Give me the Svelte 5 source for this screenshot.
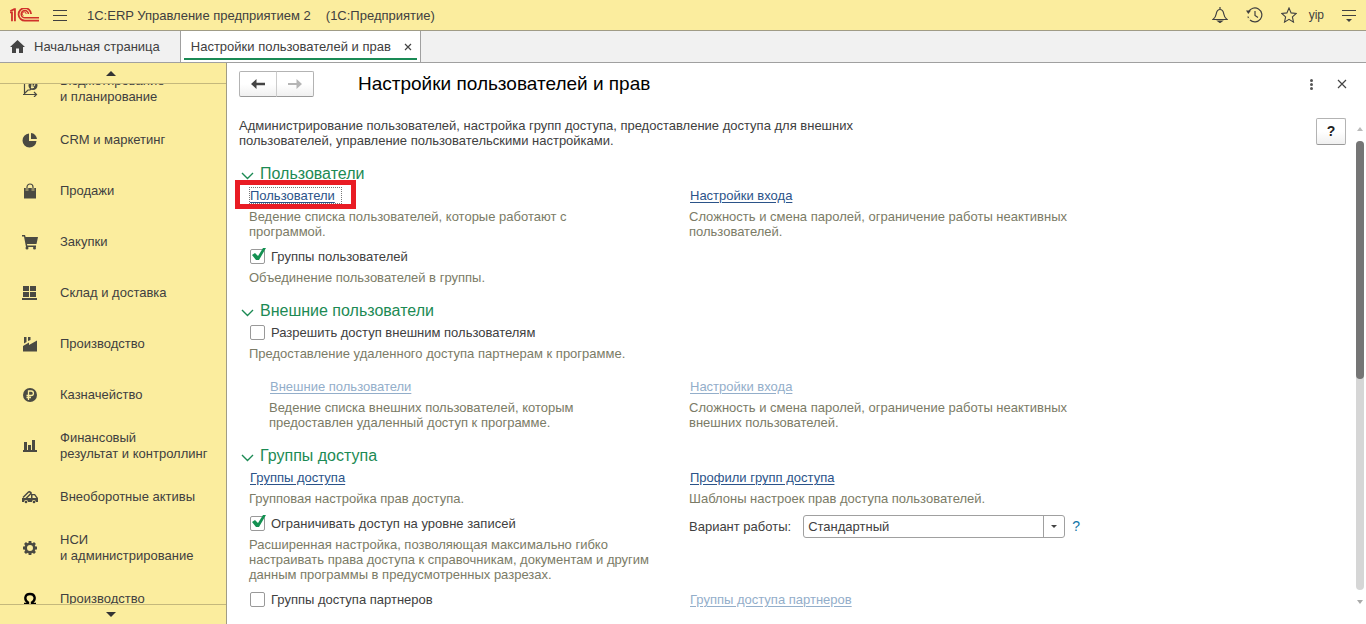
<script>
	const menu = [
		{ icon: "plan", text: "Бюджетирование\nи планирование" },
		{ icon: "pie", text: "CRM и маркетинг" },
		{ icon: "bag", text: "Продажи" },
		{ icon: "cart", text: "Закупки" },
		{ icon: "boxes", text: "Склад и доставка" },
		{ icon: "factory", text: "Производство" },
		{ icon: "ruble", text: "Казначейство" },
		{ icon: "bars", text: "Финансовый\nрезультат и контроллинг" },
		{ icon: "truck", text: "Внеоборотные активы" },
		{ icon: "gear", text: "НСИ\nи администрирование" },
		{ icon: "omega", text: "Производство" },
	];

	let open = $state({ users: true, external: true, access: true });
	let userGroups = $state(true);
	let externalAccess = $state(false);
	let recordLevel = $state(true);
	let partnerGroups = $state(false);
	let mode = $state("Стандартный");
</script>

{#snippet icon(name)}
	<svg class="icon" viewBox="0 0 16 16" aria-hidden="true">
		{#if name === "plan"}
			<path d="M2.500 0v14M1 13.500h13M12 11l2.500 2.500L12 16M3 12l3-3h2l3-3" fill="none" stroke="currentColor" stroke-width="1.200" />
			<circle cx="11" cy="4.500" r="4.500" />
			<path d="M10 7.500V2.500h1.500a1.300 1.300 0 0 1 0 2.600H9M9 6.500h3" fill="none" stroke="#fbed9e" />
		{:else if name === "pie"}
			<path d="M7 1.500V9h7.500A7 7 0 1 1 7 1.500z" />
			<path d="M9 1a6.500 6.500 0 0 1 6 6H9z" />
		{:else if name === "bag"}
			<path d="M2 5h12v10.500H2z" />
			<path d="M5 8V4a3 3 0 0 1 6 0v4" fill="none" stroke="#fbed9e" stroke-width="2.400" />
			<path d="M5 8V4a3 3 0 0 1 6 0v4" fill="none" stroke="currentColor" stroke-width="1.200" />
		{:else if name === "cart"}
			<path d="M0 1h3l.6 2H16l-1.500 7H5l.3 1.500H14V13H4L2 2.500H0z" />
			<circle cx="5" cy="14" r="1.500" />
			<circle cx="12.500" cy="14" r="1.500" />
		{:else if name === "boxes"}
			<path d="M1 1h6v5H1zM8 1h6v5H8zM1 7h6v5H1zM8 7h6v5H8zM0 13h15v2H0z" />
		{:else if name === "factory"}
			<path d="M1 15.500V10l6-3.500V9l8-4.500v11z" />
			<path d="M2 1h2.500v5L2 7.500zM6 1h2.500v3L6 5z" />
		{:else if name === "ruble"}
			<circle cx="8" cy="8" r="7" />
			<path d="M6.500 13V4h2.700a2.200 2.200 0 0 1 0 4.500H4.500M4.500 10.500H9" fill="none" stroke="#fbed9e" stroke-width="1.300" />
		{:else if name === "bars"}
			<path d="M2 4h3v8H2zM6 7h3v5H6zM10 2h3v10h-3zM1 12h14v2H1z" />
		{:else if name === "truck"}
			<path d="M1 8.500l6-6M3.500 10l6-6M7 2.500l2.500 1.500" fill="none" stroke="currentColor" stroke-width="1.500" />
			<path d="M0 9h9V5h4l3 4v4h-2.200a2 2 0 0 0-4 0H6a2 2 0 0 0-4 0H0zM10.500 6.300V9h3.800l-2-2.700z" fill-rule="evenodd" />
			<circle cx="4" cy="13" r="1.300" />
			<circle cx="12" cy="13" r="1.300" />
		{:else if name === "gear"}
			<circle cx="8" cy="8" r="4.300" fill="none" stroke="currentColor" stroke-width="2.600" />
			<path d="M8 1v2.500M8 12.500V15M1 8h2.500M12.500 8H15M3 3l1.800 1.800M11.200 11.200L13 13M3 13l1.800-1.800M11.200 4.800L13 3" stroke="currentColor" stroke-width="2.800" />
		{:else if name === "omega"}
			<path d="M2 13h4v-1.500C2 9 2.500 3 8 3s6 6 2 8.500V13h4" fill="none" stroke="#000" stroke-width="2.400" />
		{/if}
	</svg>
{/snippet}

{#snippet title(key, text)}
	<h2>
		<button class="fold" aria-expanded={open[key]} onclick={() => (open[key] = !open[key])}>
			<svg class:closed={!open[key]} width="13" height="11" viewBox="0 0 13 11" aria-hidden="true">
				<path d="M1 4l5.500 5.500L12 4" fill="none" stroke="currentColor" stroke-width="1.400" />
			</svg>
			{text}
		</button>
	</h2>
{/snippet}

<div class="app">
	<header class="topbar">
		<svg class="logo" viewBox="0 0 88 42" aria-label="1С">
			<g fill="none" stroke="#d0312a" stroke-width="5.500">
				<path d="M0 13h6v27" />
				<path d="M1 9L13 3h2v37" />
				<path d="M64 18A19 19 0 1 0 46 38H88" />
				<path d="M56 18A11 11 0 1 0 46 29.500H88" stroke-width="4.500" />
				<path d="M41 23a6 6 0 1 1 8-5" stroke-width="3" />
			</g>
		</svg>
		<button class="bare" aria-label="Меню">
			<svg width="14" height="11" viewBox="0 0 14 11"><path d="M0 .5h14M0 5.500h14M0 10.500h14" stroke="currentColor" /></svg>
		</button>
		<span class="product">1С:ERP Управление предприятием 2</span>
		<span class="platform">(1С:Предприятие)</span>
		<div class="tools">
			<button class="bare" aria-label="Уведомления">
				<svg width="16" height="16" viewBox="0 0 16 16" fill="none" stroke="currentColor" stroke-width="1.200">
					<path d="M1 12.500c2-1.500 2.800-3 3.200-5.500C4.700 4 5.500 2.500 8 2.500S11.300 4 11.800 7c.4 2.500 1.200 4 3.200 5.500zM8 0v2.500" />
					<path d="M6 14h4l-2 1.500z" fill="currentColor" />
				</svg>
			</button>
			<button class="bare" aria-label="История">
				<svg width="17" height="16" viewBox="0 0 17 16" fill="none" stroke="currentColor" stroke-width="1.200">
					<path d="M2.500 5A7 7 0 1 1 4 13" />
					<path d="M2 9.500A7 7 0 0 0 3 12" stroke-dasharray="1.500 1" />
					<path d="M9 4v4.500l3 2" />
					<path d="M0 3.500h5L2.300 7z" fill="currentColor" stroke="none" />
				</svg>
			</button>
			<button class="bare" aria-label="Избранное">
				<svg width="16" height="16" viewBox="0 0 16 16" fill="none" stroke="currentColor" stroke-width="1.100">
					<path d="M8 1l2.100 4.900 5.200.5-3.900 3.500 1.100 5.200L8 12.400l-4.500 2.700 1.100-5.200L.7 6.400l5.200-.5z" />
				</svg>
			</button>
			<button class="bare user">yip</button>
			<button class="bare" aria-label="Настройки">
				<svg width="14" height="14" viewBox="0 0 14 14">
					<path d="M0 2.500h14M0 7.500h14" stroke="currentColor" />
					<path d="M4 11h6l-3 3z" fill="currentColor" />
				</svg>
			</button>
		</div>
	</header>

	<nav class="tabs">
		<a class="tab home" href="#home">
			<svg width="15" height="13" viewBox="0 0 15 13" aria-hidden="true">
				<path d="M7.500 0L15 7h-2v6H9V8.500H6V13H2V7H0z" fill="#444" />
			</svg>
			Начальная страница
		</a>
		<div class="tab active">
			<a href="#settings">Настройки пользователей и прав</a>
			<button class="bare" aria-label="Закрыть вкладку">
				<svg width="8" height="8" viewBox="0 0 8 8"><path d="M1 1l6 6M7 1L1 7" stroke="#444" stroke-width="1.200" /></svg>
			</button>
		</div>
	</nav>

	<div class="body">
		<aside>
			<button class="scroll up" aria-label="Вверх">
				<svg width="10" height="5" viewBox="0 0 10 5"><path d="M0 5l5-5 5 5z" fill="currentColor" /></svg>
			</button>
			<ul>
				{#each menu as item}
					<li><a href="#section">{@render icon(item.icon)}<span>{item.text}</span></a></li>
				{/each}
			</ul>
			<button class="scroll down" aria-label="Вниз">
				<svg width="10" height="5" viewBox="0 0 10 5"><path d="M0 0l5 5 5-5z" fill="currentColor" /></svg>
			</button>
		</aside>

		<main>
			<div class="head">
				<div class="history">
					<button aria-label="Назад">
						<svg width="14" height="10" viewBox="0 0 14 10"><path d="M0 5l5.500-5v3.800H14v2.400H5.500V10z" fill="#444" /></svg>
					</button>
					<button aria-label="Вперед" disabled>
						<svg width="14" height="10" viewBox="0 0 14 10"><path d="M14 5L8.500 0v4H0v2h8.500v4z" fill="#b5b5b5" /></svg>
					</button>
				</div>
				<h1>Настройки пользователей и прав</h1>
				<button class="bare more" aria-label="Еще">
					<svg width="3" height="11" viewBox="0 0 3 11" fill="#555"><circle cx="1.500" cy="1.500" r="1.500" /><circle cx="1.500" cy="5.500" r="1.500" /><circle cx="1.500" cy="9.500" r="1.500" /></svg>
				</button>
				<button class="bare" aria-label="Закрыть">
					<svg width="10" height="10" viewBox="0 0 10 10"><path d="M1 1l8 8M9 1L1 9" stroke="#444" stroke-width="1.200" /></svg>
				</button>
			</div>

			<div class="content">
				<div class="form">
					<p class="intro">{"Администрирование пользователей, настройка групп доступа, предоставление доступа для внешних\nпользователей, управление пользовательскими настройками."}</p>

					<section>
						{@render title("users", "Пользователи")}
						{#if open.users}
							<div class="grid">
								<div>
									<div class="row"><a class="link current" href="#users">Пользователи</a></div>
									<p>{"Ведение списка пользователей, которые работают с\nпрограммой."}</p>
								</div>
								<div>
									<div class="row"><a class="link" href="#login">Настройки входа</a></div>
									<p>{"Сложность и смена паролей, ограничение работы неактивных\nпользователей."}</p>
								</div>
								<div>
									<label class="row"><input type="checkbox" bind:checked={userGroups} />Группы пользователей</label>
									<p>Объединение пользователей в группы.</p>
								</div>
							</div>
						{/if}
					</section>

					<section>
						{@render title("external", "Внешние пользователи")}
						{#if open.external}
							<div class="grid">
								<div class="wide">
									<label class="row"><input type="checkbox" bind:checked={externalAccess} />Разрешить доступ внешним пользователям</label>
									<p>Предоставление удаленного доступа партнерам к программе.</p>
								</div>
								<div class="sub indent">
									<div class="row"><a class="link" class:off={!externalAccess} href="#external">Внешние пользователи</a></div>
									<p>{"Ведение списка внешних пользователей, которым\nпредоставлен удаленный доступ к программе."}</p>
								</div>
								<div class="sub">
									<div class="row"><a class="link" class:off={!externalAccess} href="#external-login">Настройки входа</a></div>
									<p>{"Сложность и смена паролей, ограничение работы неактивных\nвнешних пользователей."}</p>
								</div>
							</div>
						{/if}
					</section>

					<section>
						{@render title("access", "Группы доступа")}
						{#if open.access}
							<div class="grid">
								<div>
									<div class="row"><a class="link" href="#groups">Группы доступа</a></div>
									<p>Групповая настройка прав доступа.</p>
								</div>
								<div>
									<div class="row"><a class="link" href="#profiles">Профили групп доступа</a></div>
									<p>Шаблоны настроек прав доступа пользователей.</p>
								</div>
								<div>
									<label class="row"><input type="checkbox" bind:checked={recordLevel} />Ограничивать доступ на уровне записей</label>
									<p>{"Расширенная настройка, позволяющая максимально гибко\nнастраивать права доступа к справочникам, документам и другим\nданным программы в предусмотренных разрезах."}</p>
								</div>
								<div class="variant">
									<label for="mode">Вариант работы:</label>
									<div class="select">
										<select id="mode" bind:value={mode}>
											<option>Стандартный</option>
											<option>Производительный</option>
										</select>
										<svg width="6" height="3" viewBox="0 0 6 3" aria-hidden="true"><path d="M0 0h6L3 3z" fill="#444" /></svg>
									</div>
									<button class="bare hint">?</button>
								</div>
								<label class="row"><input type="checkbox" bind:checked={partnerGroups} />Группы доступа партнеров</label>
								<div class="row"><a class="link" class:off={!partnerGroups} href="#partners">Группы доступа партнеров</a></div>
							</div>
						{/if}
					</section>
				</div>

				<button class="help">?</button>
				<div class="bar">
					<svg width="6" height="4" viewBox="0 0 6 4"><path d="M0 4l3-4 3 4z" fill="#bbb" /></svg>
					<div class="track"><div class="thumb"></div></div>
					<svg width="6" height="4" viewBox="0 0 6 4"><path d="M0 0l3 4 3-4z" fill="#aaa" /></svg>
				</div>
			</div>
		</main>
	</div>
</div>

<style>
	:global(body) {
		margin: 0;
		font-family: "Liberation Sans", Arial, sans-serif;
		font-size: 13px;
		line-height: 15px;
		color: #404040;
	}

	h1, h2, p, ul {
		margin: 0;
		padding: 0;
		font-weight: normal;
	}

	button {
		font: inherit;
		color: inherit;
		padding: 0;
		cursor: pointer;
	}

	a {
		color: inherit;
		text-decoration: none;
	}

	svg {
		display: block;
		flex: none;
	}

	.bare {
		border: 0;
		background: none;
	}

	.app {
		display: flex;
		flex-direction: column;
		height: 100vh;
		overflow: hidden;
		background: #fff;
	}

	.topbar {
		display: flex;
		align-items: center;
		height: 30px;
		padding: 0 10px;
		background: #fbed9e;
		border-bottom: 1px solid #a09c86;
	}

	.logo {
		width: 29px;
		height: 14px;
		margin-right: 14px;
	}

	.product {
		margin: 0 15px 0 20px;
	}

	.tools {
		display: flex;
		align-items: center;
		gap: 18px;
		margin-left: auto;
	}

	.user {
		font-size: 12px;
		margin-left: -6px;
	}

	.tabs {
		display: flex;
		height: 31px;
		background: #f1f1f1;
		border-bottom: 1px solid #a0a0a0;
	}

	.tab {
		display: flex;
		align-items: center;
		border-right: 1px solid #a0a0a0;
	}

	.home {
		gap: 9px;
		padding: 0 20px 0 10px;
	}

	.active {
		gap: 10px;
		padding: 0 5px 0 7px;
		border-left: 3px solid #fff;
		background: #fff linear-gradient(#1a8a55, #1a8a55) 0 27px / calc(100% - 3px) 2px no-repeat;
	}

	.active .bare {
		padding: 3px;
	}

	.body {
		display: flex;
		flex: 1;
		min-height: 0;
	}

	aside {
		display: flex;
		flex-direction: column;
		flex: none;
		width: 226px;
		background: #fbed9e;
		border-right: 1px solid #a09c86;
	}

	.scroll {
		display: flex;
		align-items: center;
		justify-content: center;
		height: 21px;
		padding-right: 4px;
		border: 0;
		background: none;
		color: #333;
	}

	.up {
		border-bottom: 1px solid #c4b87c;
	}

	.down {
		height: 20px;
		border-top: 1px solid #c4b87c;
	}

	aside ul {
		flex: 1;
		min-height: 0;
		overflow: hidden;
		list-style: none;
	}

	/* the list is scrolled a little way down */
	aside li:first-child {
		margin-top: -21px;
	}

	aside a {
		display: flex;
		align-items: center;
		gap: 22px;
		height: 51px;
		padding-left: 22px;
		line-height: 16px;
		white-space: pre-line;
	}

	.icon {
		width: 16px;
		height: 16px;
		fill: currentColor;
		color: #4a4a42;
	}

	main {
		display: flex;
		flex-direction: column;
		flex: 1;
		min-width: 0;
		padding: 8px 2px 0 12px;
	}

	.head {
		display: flex;
		align-items: center;
		height: 26px;
		padding-right: 17px;
	}

	.history {
		display: flex;
		margin-right: 44px;
	}

	.history button {
		display: flex;
		align-items: center;
		justify-content: center;
		width: 38px;
		height: 26px;
		border: 1px solid #b3b3b3;
		border-bottom-color: #999;
		border-radius: 2px 0 0 2px;
		background: linear-gradient(#fff 50%, #f0f0f0);
	}

	.history button + button {
		margin-left: -1px;
		border-left-color: #ccc;
		border-radius: 0 2px 2px 0;
	}

	h1 {
		font-size: 19px;
		line-height: 24px;
		color: #000;
	}

	.more {
		margin: 0 24px 0 auto;
	}

	.content {
		display: flex;
		flex: 1;
		min-height: 0;
		padding-top: 21px;
	}

	.form {
		flex: 1;
		min-width: 0;
	}

	.form p {
		white-space: pre-line;
	}

	.intro {
		padding-bottom: 15px;
	}

	section {
		margin-bottom: 8px;
	}

	.fold {
		display: flex;
		align-items: center;
		gap: 6px;
		height: 22px;
		padding-left: 2px;
		border: 0;
		background: none;
		font-size: 16px;
		line-height: 22px;
		color: #1c8a54;
	}

	.closed {
		transform: rotate(-90deg);
	}

	.grid {
		display: grid;
		grid-template-columns: minmax(0, 440px) 1fr;
		padding-left: 10px;
	}

	.wide {
		grid-column: 1 / -1;
	}

	.sub {
		margin-top: 8px;
	}

	.indent {
		padding-left: 20px;
	}

	.grid p {
		padding: 3px 0 7px;
		color: #7b7b66;
	}

	.row {
		display: flex;
		align-items: center;
		height: 21px;
		padding-left: 1px;
	}

	.link {
		color: #2b5389;
		text-decoration: underline;
		text-underline-offset: 2px;
	}

	.off {
		color: #93aeca;
	}

	.current {
		position: relative;
		padding-right: 6px;
		outline: 1px dotted #777;
	}

	/* red frame round the selected command */
	.current::after {
		content: "";
		position: absolute;
		inset: -8px -15px -6px -15px;
		border: 5px solid #e91c24;
		pointer-events: none;
	}

	input {
		appearance: none;
		box-sizing: border-box;
		width: 15px;
		height: 15px;
		margin: 0 6px 0 0;
		border: 1px solid #999;
		border-radius: 2px;
		background: #fff;
	}

	input:checked::before {
		content: "";
		display: block;
		width: 16px;
		height: 13px;
		margin-top: -2px;
		background: #149152;
		clip-path: polygon(1px 7px, 4px 5px, 7px 8px, 12px 0, 15px 0, 8px 12px, 5px 12px);
	}

	.variant {
		display: flex;
		align-items: center;
		height: 27px;
	}

	.select {
		position: relative;
		width: 262px;
		margin: 0 7px 0 12px;
	}

	.select select {
		appearance: none;
		box-sizing: border-box;
		width: 100%;
		height: 23px;
		padding: 0 26px 0 4px;
		border: 1px solid #a0a0a0;
		border-radius: 3px;
		background: linear-gradient(#a0a0a0, #a0a0a0) right 20px top / 1px 100% no-repeat #fff;
		font: inherit;
		color: inherit;
	}

	.select svg {
		position: absolute;
		right: 8px;
		top: 10px;
		pointer-events: none;
	}

	.hint {
		font-size: 14px;
		color: #1276a8;
	}

	.help {
		box-sizing: border-box;
		width: 30px;
		height: 27px;
		margin-right: 10px;
		border: 1px solid #b3b3b3;
		border-bottom-color: #999;
		border-radius: 2px;
		background: linear-gradient(#fff 50%, #f0f0f0);
		font-size: 14px;
		font-weight: bold;
		color: #222;
	}

	.bar {
		display: flex;
		flex-direction: column;
		align-items: center;
		gap: 10px;
		width: 8px;
		padding: 9px 0 20px;
	}

	.track {
		flex: 1;
		width: 8px;
		border-radius: 4px;
		background: #d6d6d6;
	}

	.thumb {
		height: 53%;
		border-radius: 4px;
		background: #757575;
	}
</style>
